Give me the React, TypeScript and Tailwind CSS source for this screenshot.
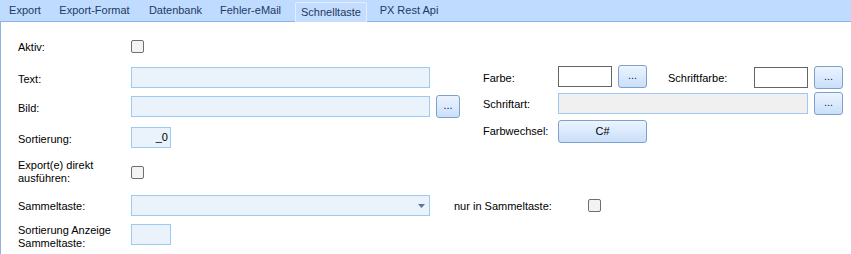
import React from 'react';
import { clsx } from 'clsx';

const tabs = [
  { name: 'Export', w: 'w-[50px]' },
  { name: 'Export-Format', w: 'w-[89px]' },
  { name: 'Datenbank', w: 'w-[73px]' },
  { name: 'Fehler-eMail', w: 'w-[77px]' },
];

interface LabelProps {
  children: React.ReactNode;
  className?: string;
}

function Label({ children, className }: LabelProps) {
  return <div className={clsx('leading-[13px] text-black', className)}>{children}</div>;
}

function CheckBox() {
  return (
    <div className="h-[13px] w-[13px] shrink-0 rounded-[2px] border border-[#6f6f6f] bg-[#f3f3f3]" />
  );
}

interface BoxProps {
  className?: string;
  children?: React.ReactNode;
}

function TextBox({ className, children }: BoxProps) {
  return (
    <div
      className={clsx(
        'flex h-[21px] shrink-0 items-center border border-[#9dcaf4] bg-[#eaf2fb]',
        className
      )}
    >
      {children}
    </div>
  );
}

function Button({ className, children }: BoxProps) {
  return (
    <div
      className={clsx(
        'flex h-[23px] shrink-0 items-center justify-center rounded-[3px] border border-[#7fa0ca] bg-linear-to-b from-[#ecf4fe] via-[#dbeafd] to-[#c9dff9]',
        className
      )}
    >
      {children}
    </div>
  );
}

function Dots() {
  return (
    <Button className="w-[29px]">
      <span className="-mt-[2px] text-[#2c1048]">...</span>
    </Button>
  );
}

function ColorBox() {
  return <div className="h-[21px] w-[54px] shrink-0 border border-[#646464] bg-white" />;
}

export default function App() {
  return (
    <div className="flex h-[254px] w-[851px] flex-col overflow-hidden bg-white font-['Liberation_Sans',Arial,sans-serif] text-[11px]">
      {/* tab strip */}
      <div className="flex h-[22px] shrink-0 items-end border-b border-[#8db2e3] bg-[#bfdbff] text-[#1e3a5f]">
        {tabs.map((t) => (
          <div key={t.name} className={clsx('flex h-[21px] items-center justify-center', t.w)}>
            {t.name}
          </div>
        ))}
        <div className="mx-[6px] -mb-px flex h-[20px] w-[72px] items-center justify-center rounded-t-[2px] border border-b-0 border-[#e4eefc] bg-[#c4ddfe]">
          Schnelltaste
        </div>
        <div className="flex h-[21px] w-[72px] items-center justify-center">PX Rest Api</div>
      </div>

      {/* page */}
      <div className="flex-1 border-l border-[#8db2e3] pl-[17px] pt-[14px]">
        <div className="flex gap-[23px]">
          {/* left column */}
          <div className="flex w-[442px] flex-col">
            <div className="flex h-[21px] items-center">
              <Label className="w-[113px] translate-y-px">Aktiv:</Label>
              <CheckBox />
            </div>
            <div className="mt-[10px] flex h-[21px] items-center">
              <Label className="w-[113px] translate-y-[2px]">Text:</Label>
              <TextBox className="w-[299px]" />
            </div>
            <div className="mt-[7px] flex h-[23px] items-center gap-[6px]">
              <Label className="w-[107px] translate-y-[2px]">Bild:</Label>
              <TextBox className="w-[299px]" />
              <Button className="w-[24px]">
                <span className="-mt-[2px] text-[#2c1048]">...</span>
              </Button>
            </div>
            <div className="mt-[9px] flex h-[21px] items-center">
              <Label className="w-[113px] translate-y-[2px]">Sortierung:</Label>
              <TextBox className="w-[40px] justify-end pr-[2px]">_0</TextBox>
            </div>
          </div>

          {/* right column */}
          <div className="flex flex-col pt-[29px]">
            <div className="flex h-[23px] items-center">
              <Label className="w-[75px] translate-y-[2px]">Farbe:</Label>
              <ColorBox />
              <div className="ml-[6px]">
                <Dots />
              </div>
              <div className="ml-[21px] flex translate-y-px items-center">
                <Label className="w-[86px] translate-y-px">Schriftfarbe:</Label>
                <ColorBox />
                <div className="ml-[6px]">
                  <Dots />
                </div>
              </div>
            </div>
            <div className="mt-[4px] flex h-[23px] items-center gap-[6px]">
              <Label className="w-[69px] translate-y-px">Schriftart:</Label>
              <div className="h-[21px] w-[250px] border border-[#9dcaf4] bg-[#f0f0f0]" />
              <Dots />
            </div>
            <div className="mt-[5px] flex h-[22px] items-center">
              <Label className="w-[75px]">Farbwechsel:</Label>
              <Button className="h-[22px] w-[89px] text-black">C#</Button>
            </div>
          </div>
        </div>

        {/* lower rows */}
        <div className="mt-[11px] flex flex-col">
          <div className="flex h-[26px] items-center">
            <Label className="w-[113px]">
              Export(e) direkt
              <br />
              ausführen:
            </Label>
            <CheckBox />
          </div>
          <div className="mt-[10px] flex h-[21px] items-center">
            <Label className="w-[113px] translate-y-px">Sammeltaste:</Label>
            <TextBox className="w-[299px] justify-end pr-[4px]">
              <svg width="7" height="4" viewBox="0 0 7 4">
                <path d="M0 0H7L3.5 4Z" fill="#5a74a0" />
              </svg>
            </TextBox>
            <Label className="ml-[24px] w-[134px] translate-y-px">nur in Sammeltaste:</Label>
            <CheckBox />
          </div>
          <div className="mt-[8px] flex items-start">
            <Label className="w-[113px]">
              Sortierung Anzeige
              <br />
              Sammeltaste:
            </Label>
            <TextBox className="w-[40px]" />
          </div>
        </div>
      </div>
    </div>
  );
}
